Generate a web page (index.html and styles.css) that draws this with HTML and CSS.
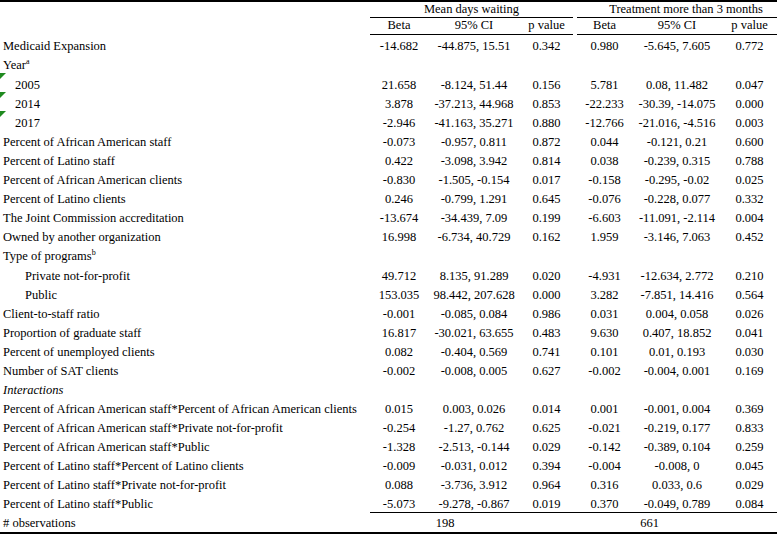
FILE: index.html
```html
<!DOCTYPE html>
<html>
<head>
<meta charset="utf-8">
<link rel="stylesheet" href="styles.css">
</head>
<body>
<table class="reg">
  <colgroup>
    <col class="c-label"><col class="c-b1"><col class="c-ci1"><col class="c-p1"><col class="c-gap"><col class="c-b2"><col class="c-ci2"><col class="c-p2">
  </colgroup>
  <thead>
    <tr class="h1">
      <th></th>
      <th colspan="3" class="grp">Mean days waiting</th>
      <th class="gap"></th>
      <th colspan="3" class="grp grp2">Treatment more than 3 months</th>
    </tr>
    <tr class="h2">
      <th></th>
      <th class="sub">Beta</th><th class="sub">95% CI</th><th class="sub">p value</th>
      <th class="gap"></th>
      <th class="sub">Beta</th><th class="sub">95% CI</th><th class="sub">p value</th>
    </tr>
  </thead>
  <tbody>
    <tr><td class="lbl">Medicaid Expansion</td><td>-14.682</td><td>-44.875, 15.51</td><td>0.342</td><td></td><td>0.980</td><td>-5.645, 7.605</td><td>0.772</td></tr>
    <tr class="tall"><td class="lbl">Year<sup>a</sup></td><td></td><td></td><td></td><td></td><td></td><td></td><td></td></tr>
    <tr><td class="lbl ind1 flag">2005</td><td>21.658</td><td>-8.124, 51.44</td><td>0.156</td><td></td><td>5.781</td><td>0.08, 11.482</td><td>0.047</td></tr>
    <tr><td class="lbl ind1 flag">2014</td><td>3.878</td><td>-37.213, 44.968</td><td>0.853</td><td></td><td>-22.233</td><td>-30.39, -14.075</td><td>0.000</td></tr>
    <tr><td class="lbl ind1 flag">2017</td><td>-2.946</td><td>-41.163, 35.271</td><td>0.880</td><td></td><td>-12.766</td><td>-21.016, -4.516</td><td>0.003</td></tr>
    <tr><td class="lbl">Percent of African American staff</td><td>-0.073</td><td>-0.957, 0.811</td><td>0.872</td><td></td><td>0.044</td><td>-0.121, 0.21</td><td>0.600</td></tr>
    <tr><td class="lbl">Percent of Latino staff</td><td>0.422</td><td>-3.098, 3.942</td><td>0.814</td><td></td><td>0.038</td><td>-0.239, 0.315</td><td>0.788</td></tr>
    <tr><td class="lbl">Percent of African American clients</td><td>-0.830</td><td>-1.505, -0.154</td><td>0.017</td><td></td><td>-0.158</td><td>-0.295, -0.02</td><td>0.025</td></tr>
    <tr><td class="lbl">Percent of Latino clients</td><td>0.246</td><td>-0.799, 1.291</td><td>0.645</td><td></td><td>-0.076</td><td>-0.228, 0.077</td><td>0.332</td></tr>
    <tr><td class="lbl">The Joint Commission accreditation</td><td>-13.674</td><td>-34.439, 7.09</td><td>0.199</td><td></td><td>-6.603</td><td>-11.091, -2.114</td><td>0.004</td></tr>
    <tr><td class="lbl">Owned by another organization</td><td>16.998</td><td>-6.734, 40.729</td><td>0.162</td><td></td><td>1.959</td><td>-3.146, 7.063</td><td>0.452</td></tr>
    <tr class="tall"><td class="lbl">Type of programs<sup>b</sup></td><td></td><td></td><td></td><td></td><td></td><td></td><td></td></tr>
    <tr><td class="lbl ind2">Private not-for-profit</td><td>49.712</td><td>8.135, 91.289</td><td>0.020</td><td></td><td>-4.931</td><td>-12.634, 2.772</td><td>0.210</td></tr>
    <tr><td class="lbl ind2">Public</td><td>153.035</td><td>98.442, 207.628</td><td>0.000</td><td></td><td>3.282</td><td>-7.851, 14.416</td><td>0.564</td></tr>
    <tr><td class="lbl">Client-to-staff ratio</td><td>-0.001</td><td>-0.085, 0.084</td><td>0.986</td><td></td><td>0.031</td><td>0.004, 0.058</td><td>0.026</td></tr>
    <tr><td class="lbl">Proportion of graduate staff</td><td>16.817</td><td>-30.021, 63.655</td><td>0.483</td><td></td><td>9.630</td><td>0.407, 18.852</td><td>0.041</td></tr>
    <tr><td class="lbl">Percent of unemployed clients</td><td>0.082</td><td>-0.404, 0.569</td><td>0.741</td><td></td><td>0.101</td><td>0.01, 0.193</td><td>0.030</td></tr>
    <tr><td class="lbl">Number of SAT clients</td><td>-0.002</td><td>-0.008, 0.005</td><td>0.627</td><td></td><td>-0.002</td><td>-0.004, 0.001</td><td>0.169</td></tr>
    <tr><td class="lbl it">Interactions</td><td></td><td></td><td></td><td></td><td></td><td></td><td></td></tr>
    <tr><td class="lbl">Percent of African American staff*Percent of African American clients</td><td>0.015</td><td>0.003, 0.026</td><td>0.014</td><td></td><td>0.001</td><td>-0.001, 0.004</td><td>0.369</td></tr>
    <tr><td class="lbl">Percent of African American staff*Private not-for-profit</td><td>-0.254</td><td>-1.27, 0.762</td><td>0.625</td><td></td><td>-0.021</td><td>-0.219, 0.177</td><td>0.833</td></tr>
    <tr><td class="lbl">Percent of African American staff*Public</td><td>-1.328</td><td>-2.513, -0.144</td><td>0.029</td><td></td><td>-0.142</td><td>-0.389, 0.104</td><td>0.259</td></tr>
    <tr><td class="lbl">Percent of Latino staff*Percent of Latino clients</td><td>-0.009</td><td>-0.031, 0.012</td><td>0.394</td><td></td><td>-0.004</td><td>-0.008, 0</td><td>0.045</td></tr>
    <tr><td class="lbl">Percent of Latino staff*Private not-for-profit</td><td>0.088</td><td>-3.736, 3.912</td><td>0.964</td><td></td><td>0.316</td><td>0.033, 0.6</td><td>0.029</td></tr>
    <tr><td class="lbl">Percent of Latino staff*Public</td><td>-5.073</td><td>-9.278, -0.867</td><td>0.019</td><td></td><td>0.370</td><td>-0.049, 0.789</td><td>0.084</td></tr>
    <tr class="obs"><td class="lbl">#&nbsp;observations</td><td colspan="2">198</td><td></td><td></td><td colspan="2">661</td><td></td></tr>
  </tbody>
</table>
</body>
</html>
```

FILE: styles.css
```css
html, body {
  margin: 0;
  padding: 0;
  background: #ffffff;
}
body {
  font-family: "Liberation Serif", "Times New Roman", serif;
  font-size: 12.5px;
  color: #000;
  width: 777px;
  height: 534px;
  overflow: hidden;
}
.reg {
  width: 777px;
  table-layout: fixed;
  border-collapse: separate;
  border-spacing: 0;
  border-top: 2px solid #000;
  border-bottom: 2px solid #000;
}
.c-label { width: 370px; }
.c-b1 { width: 58px; }
.c-ci1 { width: 92px; }
.c-p1 { width: 53px; }
.c-gap { width: 4px; }
.c-b2 { width: 55px; }
.c-ci2 { width: 90px; }
.c-p2 { width: 55px; }

th, td {
  padding: 0;
  font-weight: normal;
  text-align: center;
  white-space: nowrap;
  line-height: 15px;
  vertical-align: top;
  box-sizing: border-box;
}
.h1 th {
  height: 16px;
}
.h1 .grp {
  border-bottom: 1px solid #000;
}
.h1 .grp2 {
  padding-left: 18px;
}
.h2 th {
  height: 17px;
}
.h2 .sub {
  border-bottom: 1px solid #000;
}
tbody td {
  height: 19px;
  padding-top: 4px;
}
tbody .tall td {
  height: 20px;
}
.lbl {
  text-align: left;
  padding-left: 3px;
}
.ind1 { padding-left: 15px; }
.ind2 { padding-left: 25px; }
.it { font-style: italic; }
sup {
  font-size: 8px;
  line-height: 0;
  vertical-align: 5px;
}
.flag {
  position: relative;
}
.flag::before {
  content: "";
  position: absolute;
  left: 0;
  top: -1px;
  width: 0;
  height: 0;
  border-top: 6px solid #1f8a1f;
  border-right: 6px solid transparent;
}
tbody .obs td {
  border-top: 1px solid #000;
  height: 20px;
  padding-top: 3px;
}
tbody .obs td.lbl {
  border-top: none;
  padding-top: 4px;
}
```
